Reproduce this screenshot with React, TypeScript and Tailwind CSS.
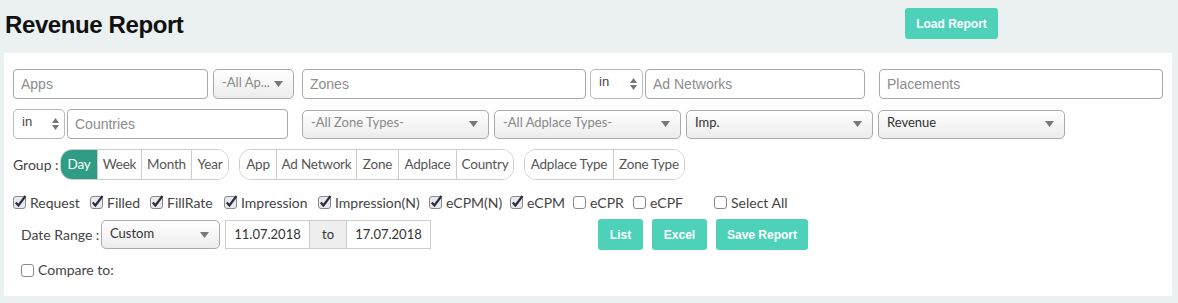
const sans = "font-['Liberation_Sans',Arial,sans-serif]";
const ui = "font-['Lato','Noto_Sans',sans-serif]";

function TextBox({ placeholder, w }: { placeholder: string; w: string }) {
  return (
    <div
      className={`${w} h-[30px] border border-[#a9a9a9] rounded-[4px] bg-white flex items-center px-[7px] text-[14px] text-[#8c8c8c] ${sans}`}
    >
      {placeholder}
    </div>
  );
}

function Select({ label, w, dark = false, h = 'h-[30px]' }: { label: string; w: string; dark?: boolean; h?: string }) {
  return (
    <div
      className={`${w} ${h} border border-[#aaa] rounded-[5px] bg-gradient-to-b from-white to-[#ececec] flex items-center justify-between pl-[8px] pr-[10px] text-[13px] ${ui} ${dark ? 'text-[#333]' : 'text-[#888]'}`}
    >
      <span className="-mt-[2px]">{label}</span>
      <svg width="9" height="6" viewBox="0 0 9 6">
        <path d="M0 0h9L4.5 6z" fill="#777" />
      </svg>
    </div>
  );
}

function InSelect({ w }: { w: string }) {
  return (
    <div
      className={`${w} h-[30px] border border-[#bbb] rounded-[5px] bg-white flex items-center justify-between pl-[8px] pr-[5px] text-[13px] text-[#444] ${sans}`}
    >
      <span className="-mt-[4px]">in</span>
      <svg width="7" height="12" viewBox="0 0 7 12">
        <path d="M0 5h7L3.5 0zM0 7h7L3.5 12z" fill="#777" />
      </svg>
    </div>
  );
}

function Check({ checked }: { checked: boolean }) {
  return (
    <svg width="14" height="14" viewBox="0 0 14 14" className="shrink-0">
      <rect x="0.5" y="1.5" width="12" height="12" rx="2.5" fill={checked ? '#e8eaf0' : '#fff'} stroke="#8a8a8a" />
      {checked && <path d="M2.8 7.5l2.6 3L12.5 1" fill="none" stroke="#2c2c3a" strokeWidth="2.2" />}
    </svg>
  );
}

function Seg({ items, active }: { items: [string, string][]; active?: number }) {
  return (
    <div className="flex h-[31px] border border-[#ccc] rounded-[12px] overflow-hidden">
      {items.map(([it, w], i) => (
        <div
          key={it}
          className={`${w} flex items-center justify-center text-[13.5px] tracking-[-0.2px] ${i > 0 ? 'border-l border-[#ccc]' : ''} ${
            i === active ? 'bg-[#2f9c86] text-white border-[#2f9c86]' : 'text-[#555] bg-white'
          }`}
        >
          {it}
        </div>
      ))}
    </div>
  );
}

const metrics: [string, boolean, string][] = [
  ['Request', true, 'w-[77px]'],
  ['Filled', true, 'w-[60px]'],
  ['FillRate', true, 'w-[74px]'],
  ['Impression', true, 'w-[94px]'],
  ['Impression(N)', true, 'w-[111px]'],
  ['eCPM(N)', true, 'w-[81px]'],
  ['eCPM', true, 'w-[63px]'],
  ['eCPR', false, 'w-[60px]'],
  ['eCPF', false, 'w-[81px]'],
  ['Select All', false, 'w-[90px]'],
];

export default function App() {
  return (
    <div className="w-[1178px] h-[303px] bg-[#ebf0f0] overflow-hidden">
      <div className="h-[53px] flex items-start">
        <div className="w-[905px] pl-[5px] pt-[7px]">
          <h1 className={`text-[24px] font-bold text-[#111] tracking-[-0.4px] ${sans}`}>Revenue Report</h1>
        </div>
        <button
          className={`mt-[8px] w-[93px] h-[31px] rounded-[3px] bg-[#4dd1b9] text-white text-[12px] font-bold ${sans}`}
        >
          Load Report
        </button>
      </div>
      <div className={`ml-[4px] w-[1168px] h-[243px] bg-white pl-[9px] pt-[16px] ${ui}`}>
        <div className="flex items-center">
          <TextBox placeholder="Apps" w="w-[195px]" />
          <div className="ml-[5px]">
            <Select label="-All Ap..." w="w-[81px]" />
          </div>
          <div className="ml-[8px]">
            <TextBox placeholder="Zones" w="w-[284px]" />
          </div>
          <div className="ml-[4px]">
            <InSelect w="w-[53px]" />
          </div>
          <div className="ml-[2px]">
            <TextBox placeholder="Ad Networks" w="w-[220px]" />
          </div>
          <div className="ml-[14px]">
            <TextBox placeholder="Placements" w="w-[284px]" />
          </div>
        </div>
        <div className="flex items-center mt-[10px]">
          <InSelect w="w-[52px]" />
          <div className="ml-[2px]">
            <TextBox placeholder="Countries" w="w-[221px]" />
          </div>
          <div className="ml-[14px] flex gap-[5px]">
            <Select label="-All Zone Types-" w="w-[187px]" h="h-[29px]" />
            <Select label="-All Adplace Types-" w="w-[187px]" h="h-[29px]" />
            <Select label="Imp." w="w-[187px]" h="h-[29px]" dark />
            <Select label="Revenue" w="w-[187px]" h="h-[29px]" dark />
          </div>
        </div>
        <div className="flex items-center mt-[10px]">
          <span className="text-[14px] text-[#444] w-[47px]">Group :</span>
          <Seg
            items={[
              ['Day', 'w-[36px]'],
              ['Week', 'w-[44px]'],
              ['Month', 'w-[50px]'],
              ['Year', 'w-[37px]'],
            ]}
            active={0}
          />
          <div className="ml-[10px]">
            <Seg
              items={[
                ['App', 'w-[36px]'],
                ['Ad Network', 'w-[80px]'],
                ['Zone', 'w-[42px]'],
                ['Adplace', 'w-[58px]'],
                ['Country', 'w-[57px]'],
              ]}
            />
          </div>
          <div className="ml-[10px]">
            <Seg
              items={[
                ['Adplace Type', 'w-[88px]'],
                ['Zone Type', 'w-[71px]'],
              ]}
            />
          </div>
        </div>
        <div className="flex items-center mt-[13px] h-[18px]">
          {metrics.map(([label, c, w]) => (
            <div key={label} className={`${w} flex items-center gap-[3px] text-[14px] text-[#444]`}>
              <Check checked={c} />
              <span>{label}</span>
            </div>
          ))}
        </div>
        <div className="flex items-center mt-[8px] pl-[8px]">
          <span className="text-[14px] text-[#444] w-[80px]">Date Range :</span>
          <Select label="Custom" w="w-[119px]" h="h-[29px]" dark />
          <div className={`ml-[5px] flex h-[29px] border border-[#ccc] text-[13px] text-[#333] ${ui}`}>
            <div className="w-[83px] flex items-center justify-center">11.07.2018</div>
            <div className="w-[38px] flex items-center justify-center bg-[#eee] border-x border-[#ccc]">to</div>
            <div className="w-[83px] flex items-center justify-center">17.07.2018</div>
          </div>
          <div className={`ml-[167px] flex gap-[9px] text-white text-[12px] font-bold ${sans}`}>
            <button className="w-[45px] h-[31px] rounded-[3px] bg-[#4dd1b9]">List</button>
            <button className="w-[55px] h-[31px] rounded-[3px] bg-[#4dd1b9]">Excel</button>
            <button className="w-[92px] h-[31px] rounded-[3px] bg-[#4dd1b9]">Save Report</button>
          </div>
        </div>
        <div className="flex items-center gap-[3px] mt-[9px] pl-[8px] text-[14px] text-[#444]">
          <Check checked={false} />
          <span>Compare to:</span>
        </div>
      </div>
    </div>
  );
}
